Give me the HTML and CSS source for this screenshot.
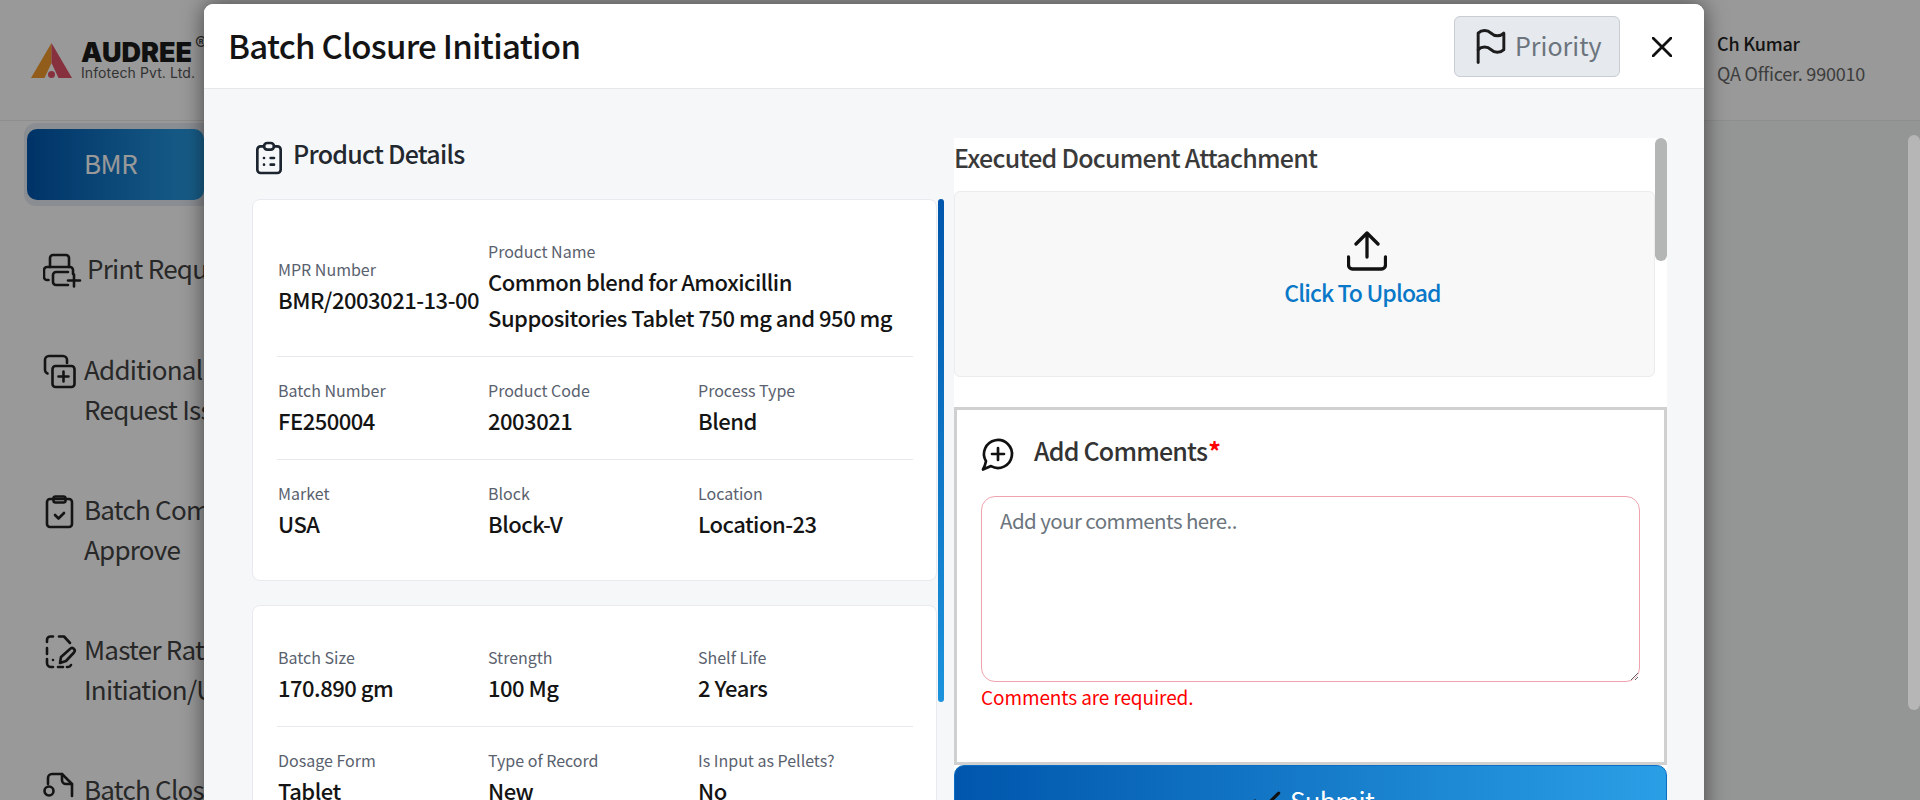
FILE: index.html
```html
<!DOCTYPE html>
<html lang="en">
<head>
<meta charset="utf-8">
<title>Batch Closure Initiation</title>
<link rel="stylesheet" href="styles.css">
</head>
<body>
<div class="page">
  <header class="topbar">
    <div class="brand">
      <svg class="brand-mark" viewBox="0 0 41 35" aria-hidden="true">
        <polygon points="20.5,0 0,35 13.5,35 20.5,20" fill="#f39a2c"/>
        <polygon points="20.5,0 41,35 27.5,35 20.5,20" fill="#e2526a"/>
        <circle cx="20.5" cy="31.5" r="3.5" fill="#e2526a"/>
      </svg>
      <div class="brand-text">
        <div class="brand-name">AUDREE<sup class="brand-reg">®</sup></div>
        <div class="brand-sub">Infotech Pvt. Ltd.</div>
      </div>
    </div>
    <div class="user">
      <div class="user-name">Ch Kumar</div>
      <div class="user-role">QA Officer. 990010</div>
    </div>
  </header>
  <div class="main">
    <aside class="sidebar">
      <div class="tab-wrap"><div class="tab">BMR</div></div>
      <nav class="nav">
        <div class="nav-item">
          <svg class="nav-icon nav-icon-wide" viewBox="0 0 44 40" aria-hidden="true">
            <path d="M7 18V9a3 3 0 0 1 3-3h13a3 3 0 0 1 3 3v9"/>
            <path d="M5.500 31H4a3 3 0 0 1-3-3v-7a3 3 0 0 1 3-3h23a3 3 0 0 1 3 3v4"/>
            <path d="M25 36H13a3 3 0 0 1-3-3v-7a3 3 0 0 1 3-3h12"/>
            <path d="M25 31.500h12M31 25.500v12"/>
          </svg>
          <span class="nav-text">Print Request</span>
        </div>
        <div class="nav-item">
          <svg class="nav-icon" viewBox="0 0 41 40" aria-hidden="true">
            <path d="M24 13V10a4 4 0 0 0-4-4H6a4 4 0 0 0-4 4v10a4 4 0 0 0 2.500 3.500"/>
            <rect x="9.500" y="16" width="22" height="21" rx="3"/>
            <path d="M15.500 26.500h10M20.500 21.500v10"/>
          </svg>
          <span class="nav-text">Additional Copy<br>Request Issuance</span>
        </div>
        <div class="nav-item">
          <svg class="nav-icon" viewBox="0 0 41 40" aria-hidden="true">
            <rect x="4" y="9" width="25" height="28" rx="3"/>
            <rect x="10.500" y="6.500" width="12" height="6" rx="2"/>
            <path d="M12 25l3.500 3.500 5.500-5.500"/>
          </svg>
          <span class="nav-text">Batch Completion<br>Approve</span>
        </div>
        <div class="nav-item">
          <svg class="nav-icon" viewBox="0 0 41 40" aria-hidden="true">
            <path d="M4 12v-2a3.500 3.500 0 0 1 3.500-3.500H10M16 6.500h5L27 13M4 18v6M4 29v4a4 4 0 0 0 4 4h2M15 37h5M24 37h1a3.500 3.500 0 0 0 3-2M10 30h.01"/>
            <path d="M17 33l1-6 9-8a2.500 2.500 0 0 1 4 3.500L23 31z"/>
          </svg>
          <span class="nav-text">Master Rating<br>Initiation/Update</span>
        </div>
        <div class="nav-item">
          <svg class="nav-icon" viewBox="0 0 41 40" aria-hidden="true">
            <path d="M5 14V8a4 4 0 0 1 4-4h10l10 10v12"/>
            <path d="M19 4v6a4 4 0 0 0 4 4h6"/>
            <circle cx="6" cy="21" r="4.500"/>
          </svg>
          <span class="nav-text">Batch Closure</span>
        </div>
      </nav>
    </aside>
  </div>
</div>
<div class="page-thumb"></div>
<div class="backdrop"></div>
<section class="modal">
  <header class="modal-head">
    <h1 class="modal-title">Batch Closure Initiation</h1>
    <button class="priority" type="button">
      <svg class="priority-icon" viewBox="0 0 24 24" aria-hidden="true">
        <path d="M5 5a5 5 0 0 1 7 0a5 5 0 0 0 7 0v9a5 5 0 0 1-7 0a5 5 0 0 0-7 0v-9z"/>
        <path d="M5 21v-7"/>
      </svg>
      <span class="priority-text">Priority</span>
    </button>
    <svg class="close" viewBox="0 0 20 20" aria-hidden="true"><path d="M1 1l18 18M19 1L1 19"/></svg>
  </header>
  <div class="modal-body">
    <div class="col-left">
      <div class="section-head">
        <svg class="section-icon" viewBox="0 0 24 24" aria-hidden="true">
          <path d="M9 5H7a2 2 0 0 0-2 2v12a2 2 0 0 0 2 2h10a2 2 0 0 0 2-2V7a2 2 0 0 0-2-2h-2"/>
          <rect x="9" y="3" width="6" height="4" rx="2"/>
          <path d="M9 12h.01M13 12h2M9 16h.01M13 16h2"/>
        </svg>
        <h2 class="section-title">Product Details</h2>
      </div>
      <div class="details-scroll">
        <div class="cards">
          <div class="card">
            <div class="row row-center">
              <div class="cell"><div class="label">MPR Number</div><div class="value">BMR/2003021-13-00</div></div>
              <div class="cell cell-wide"><div class="label">Product Name</div><div class="value">Common blend for Amoxicillin<br>Suppositories Tablet 750 mg and 950 mg</div></div>
            </div>
            <div class="row">
              <div class="cell"><div class="label">Batch Number</div><div class="value">FE250004</div></div>
              <div class="cell"><div class="label">Product Code</div><div class="value">2003021</div></div>
              <div class="cell"><div class="label">Process Type</div><div class="value">Blend</div></div>
            </div>
            <div class="row">
              <div class="cell"><div class="label">Market</div><div class="value">USA</div></div>
              <div class="cell"><div class="label">Block</div><div class="value">Block-V</div></div>
              <div class="cell"><div class="label">Location</div><div class="value">Location-23</div></div>
            </div>
          </div>
          <div class="card">
            <div class="row">
              <div class="cell"><div class="label">Batch Size</div><div class="value">170.890 gm</div></div>
              <div class="cell"><div class="label">Strength</div><div class="value">100 Mg</div></div>
              <div class="cell"><div class="label">Shelf Life</div><div class="value">2 Years</div></div>
            </div>
            <div class="row">
              <div class="cell"><div class="label">Dosage Form</div><div class="value">Tablet</div></div>
              <div class="cell"><div class="label">Type of Record</div><div class="value">New</div></div>
              <div class="cell"><div class="label">Is Input as Pellets?</div><div class="value">No</div></div>
            </div>
          </div>
        </div>
        <div class="details-thumb"></div>
      </div>
    </div>
    <div class="col-right">
      <div class="right-thumb"></div>
      <h2 class="attach-title">Executed Document Attachment</h2>
      <div class="upload">
        <svg class="upload-icon" viewBox="0 0 40 40" aria-hidden="true">
          <path d="M1.500 26v8a4 4 0 0 0 4 4h29a4 4 0 0 0 4-4v-8"/>
          <path d="M20 26V2M9 13L20 2l11 11"/>
        </svg>
        <div class="upload-text">Click To Upload</div>
      </div>
      <div class="comments">
        <div class="comments-head">
          <svg class="comments-icon" viewBox="0 0 40 40" aria-hidden="true">
            <path d="M9 28.200A14 14 0 1 1 14 33.100L6 36.500Q8 33 9 28.200Z"/>
            <path d="M15 21h12M21 15v12"/>
          </svg>
          <h3 class="comments-title">Add Comments<span class="req">*</span></h3>
        </div>
        <textarea class="comments-input" placeholder="Add your comments here.."></textarea>
        <div class="comments-error">Comments are required.</div>
      </div>
      <button class="submit" type="button">
        <svg class="submit-icon" viewBox="0 0 24 24" aria-hidden="true"><path d="M5 12l5 5L20 7"/></svg>
        <span class="submit-text">Submit</span>
      </button>
    </div>
  </div>
</section>
</body>
</html>
```
FILE: styles.css
```css
* { box-sizing: border-box; }
html, body { margin: 0; height: 100%; }
body {
  height: 800px;
  overflow: hidden;
  position: relative;
  background: #f7f8f8;
  color: #222;
  font-family: "Noto Sans CJK JP", "Noto Sans", sans-serif;
}
h1, h2, h3 { margin: 0; font-weight: 500; }

/* underlying page */
.page { height: 800px; display: flex; flex-direction: column; }
.topbar {
  height: 121px;
  flex: none;
  display: flex;
  justify-content: space-between;
  background: #fff;
  border-bottom: 1px solid #ededed;
  padding: 43px 0 0 31px;
}
.brand { display: flex; align-items: flex-start; gap: 9px; }
.brand-mark { width: 41px; height: 35px; }
.brand-text { font-family: Inter, sans-serif; }
.brand-name { font-size: 27px; font-weight: 900; line-height: 20px; color: #1c1c1c; position: relative; }
.brand-reg { position: absolute; top: -8px; left: 114px; font-size: 18px; font-weight: 400; line-height: 18px; color: #444; }
.brand-sub { font-size: 14px; line-height: 20px; color: #555; letter-spacing: .1px; }
.user { width: 203px; }
.user-name { font-size: 18px; font-weight: 500; line-height: 26px; margin-top: -13px; color: #222; letter-spacing: -.2px; }
.user-role { font-size: 18px; line-height: 30px; color: #666; margin-top: 2px; letter-spacing: -.2px; }
.main { flex: 1; display: flex; min-height: 0; }
.sidebar { width: 420px; background: #fff; padding: 2px 0 0 24px; flex: none; }
.tab-wrap { width: 190px; padding: 6px 3px; background: #e6ebf3; border-radius: 12px; }
.tab {
  width: 177px;
  height: 71px;
  border-radius: 10px;
  background: linear-gradient(90deg, #0056ac, #2a9fe6);
  color: #fff;
  font-size: 26px;
  line-height: 68px;
  padding-left: 57px;
  letter-spacing: -.5px;
}
.nav { margin: 43px 0 0 19px; display: flex; flex-direction: column; gap: 61px; }
.nav-item { display: flex; align-items: flex-start; font-size: 26px; line-height: 40px; color: #444; white-space: nowrap; letter-spacing: -.75px; }
.nav-text { margin-top: -1px; }
.nav-icon { width: 41px; height: 40px; flex: none; fill: none; stroke: #222; stroke-width: 2.600; stroke-linecap: round; stroke-linejoin: round; }
.nav-icon-wide { width: 44px; }
.page-thumb { position: absolute; z-index: 2; right: 0; top: 135px; width: 12px; height: 575px; border-radius: 6px; background: #b5b6b5; }
.backdrop { position: absolute; z-index: 1; inset: 0; background: rgba(0, 0, 0, .4); }

/* modal */
.modal {
  position: absolute;
  z-index: 3;
  left: 204px;
  top: 4px;
  width: 1500px;
  background: #f6f7f9;
  border-radius: 9px;
  box-shadow: 0 0 22px rgba(0, 0, 0, .55);
}
.modal-head {
  height: 85px;
  display: flex;
  align-items: center;
  background: #fff;
  border-bottom: 1px solid #e6e8ec;
  border-radius: 9px 9px 0 0;
  padding: 0 32px 0 24px;
}
.modal-title { font-size: 33px; line-height: 44px; color: #141414; flex: 1; letter-spacing: -.72px; margin-top: -2px; }
.priority {
  width: 166px;
  height: 61px;
  margin: 0 32px 0 0;
  display: flex;
  align-items: center;
  gap: 2px;
  padding: 0 0 0 14px;
  background: #e6e9ee;
  border: 1px solid #c8ccd3;
  border-radius: 6px;
  color: #6c757d;
  font: 400 25px/34px "Noto Sans CJK JP", sans-serif;
}
.priority-text { margin-top: -2px; }
.priority-icon { width: 44px; height: 44px; flex: none; fill: none; stroke: #1c1c1c; stroke-width: 1.600; stroke-linecap: round; stroke-linejoin: round; }
.close { width: 20px; height: 20px; flex: none; margin-top: 1px; fill: none; stroke: #111; stroke-width: 2.800; stroke-linecap: round; }
.modal-body { display: flex; gap: 10px; padding: 49px 37px 0 48px; }
.col-left { width: 692px; flex: none; }
.section-head { display: flex; height: 61px; align-items: flex-start; margin-left: -3px; gap: 4px; }
.section-icon { width: 40px; height: 40px; flex: none; fill: none; stroke: #1c2430; stroke-width: 1.600; stroke-linecap: round; stroke-linejoin: round; }
.section-title { font-size: 25px; line-height: 34px; color: #23282f; letter-spacing: -.75px; margin-top: -2px; }
.details-scroll { display: flex; align-items: flex-start; gap: 1px; }
.cards { width: 685px; display: flex; flex-direction: column; gap: 24px; }
.card { background: #fff; border: 1px solid #e8eaef; border-radius: 8px; padding: 18px 23px 18px 24px; }
.row { display: grid; grid-template-columns: 210px 210px 1fr; padding: 21px 0 21px 1px; border-bottom: 1px solid #e7e9ed; }
.row:last-child { border-bottom: 0; }
.row-center { align-items: center; }
.cell-wide { grid-column: span 2; }
.label { font-size: 16px; line-height: 24px; color: #59616e; }
.value { font-size: 22px; line-height: 36px; font-weight: 500; color: #141414; white-space: nowrap; letter-spacing: -.5px; }
.details-thumb { width: 6px; height: 503px; flex: none; border-radius: 3px; background: linear-gradient(180deg, #0056ac, #1c93dc); }
.col-right { width: 713px; flex: none; background: #fff; position: relative; }
.right-thumb { position: absolute; right: 0; top: 0; width: 12px; height: 123px; border-radius: 6px; background: #b4b6b5; }
.attach-title { font-size: 25px; line-height: 39px; color: #3a3a3a; margin-bottom: 14px; letter-spacing: -.75px; }
.upload {
  width: 701px;
  height: 186px;
  background: #f8f8f8;
  border: 1px solid #ececec;
  border-radius: 6px;
  display: flex;
  flex-direction: column;
  align-items: center;
  padding: 39px 0 0 116px;
  margin-bottom: 30px;
}
.upload-icon { width: 40px; height: 40px; flex: none; fill: none; stroke: #111; stroke-width: 3.300; stroke-linecap: round; stroke-linejoin: round; margin-left: 8px; }
.upload-text { font-size: 23px; line-height: 36px; font-weight: 500; color: #0a78c8; margin-top: 3px; letter-spacing: -.9px; }
.comments { height: 358px; border: 3px solid #d0d0d0; padding: 23px 24px 0; background: #fff; }
.comments-head { display: flex; align-items: flex-start; gap: 17px; margin-left: -4px; height: 63px; }
.comments-icon { width: 40px; height: 40px; flex: none; fill: none; stroke: #111; stroke-width: 2.700; stroke-linecap: round; stroke-linejoin: round; }
.comments-title { font-size: 25px; line-height: 34px; color: #333; letter-spacing: -.8px; }
.req { color: #f00; font-weight: 700; letter-spacing: 0; position: relative; top: 0; left: 1px; }
.comments-input {
  display: block;
  width: 100%;
  height: 186px;
  padding: 6px 18px;
  border: 1px solid #efa3ae;
  border-radius: 14px;
  outline: 0;
  font: 400 20.500px/34px "Noto Sans CJK JP", sans-serif;
  letter-spacing: -.58px;
  color: #333;
  background: #fff;
}
.comments-input::placeholder { color: #6c757d; opacity: 1; }
.comments-error { font-size: 19px; line-height: 30px; color: #f00; letter-spacing: -.1px; }
.submit {
  width: 713px;
  height: 70px;
  display: flex;
  align-items: center;
  justify-content: center;
  gap: 5px;
  border: 1px solid #0a6fc4;
  border-radius: 10px;
  background: linear-gradient(90deg, #0056ac, #2a9fe6);
  color: #fff;
  font: 400 26px/40px "Noto Sans CJK JP", sans-serif;
  letter-spacing: -.75px;
}
.submit-text { margin-top: -1px; }
.submit-icon { width: 38px; height: 38px; flex: none; margin-top: 2px; fill: none; stroke: #111; stroke-width: 2; stroke-linecap: round; stroke-linejoin: round; }
```
